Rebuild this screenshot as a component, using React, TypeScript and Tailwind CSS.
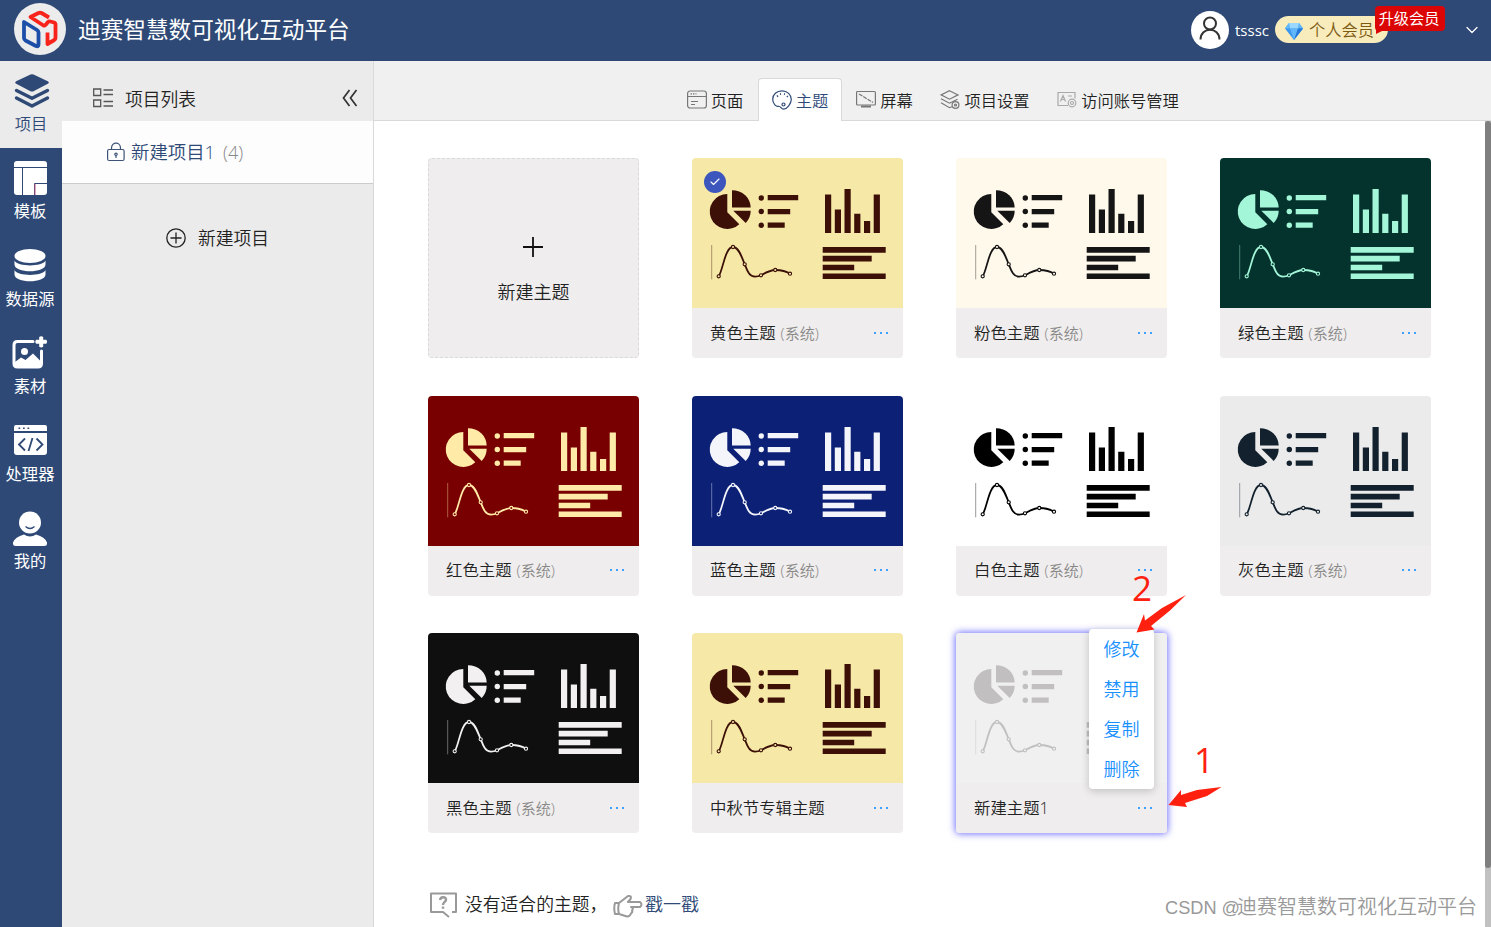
import React from 'react';
import { ChevronDown, Check } from 'lucide-react';

interface Theme {
  name: string;
  system?: boolean;
  bg: string;
  fg: string;
  checked?: boolean;
  active?: boolean;
}

const themes: Theme[] = [
  { name: '黄色主题', system: true, bg: '#f6e8a7', fg: '#3c0f07', checked: true },
  { name: '粉色主题', system: true, bg: '#fff9eb', fg: '#151515' },
  { name: '绿色主题', system: true, bg: '#04332e', fg: '#a3f6d8' },
  { name: '红色主题', system: true, bg: '#790000', fg: '#ffeaa7' },
  { name: '蓝色主题', system: true, bg: '#0c2176', fg: '#f3f5fb' },
  { name: '白色主题', system: true, bg: '#ffffff', fg: '#000000' },
  { name: '灰色主题', system: true, bg: '#ebebeb', fg: '#13212e' },
  { name: '黑色主题', system: true, bg: '#0f0f0f', fg: '#f2f0f0' },
  { name: '中秋节专辑主题', bg: '#f6e8a7', fg: '#3c0f07' },
  { name: '新建主题1', bg: '#f0f0f0', fg: '#c1bfbf', active: true },
];

const menuItems = ['修改', '禁用', '复制', '删除'];

const Logo = () => (
  <svg width="52" height="52" viewBox="0 0 52 52" fill="none" strokeWidth="3.800" strokeLinejoin="round">
    <circle cx="26" cy="26" r="26" fill="#ececec" />
    <path d="M10 19v16q0 1.500 1.500 2.500L22 43q2.500 1 2.500-1.500V29.500q0-1.500-1.500-2.500z" stroke="#1d4fa8" />
    <path d="M35 14.500L27.500 10q-1.500-.5-3 0L16.500 14l13 8.500q1 .5 2-.5l2.500-3q1-1 2.500-.5l3.500 1q1.500.5 1.500 2v13q0 2-2 3l-6 3.500V29.500" stroke="#f8231a" />
  </svg>
);

const ThumbChart = ({ color, bg }: { color: string; bg: string }) => (
  <svg width="211" height="150" viewBox="0 0 211 150" fill={color}>
    <path d="M35.300 36a17.500 17.500 0 1 0 12 30.200L35.300 54.300z" />
    <path d="M40 32.300a18.700 17.200 0 0 1 18.700 17.200H40z" />
    <path d="M41.300 52.700h17.400q0 7-5 12.300z" />
    {[40, 53.5, 67.3].map((y) => (
      <circle key={y} cx="69.300" cy={y} r="2.700" />
    ))}
    <path d="M75.700 37h30.500v5.200H75.700zM75.700 51h22.500v5.200H75.700zM75.700 64.600h17v5.200h-17z" />
    <path d="M133 36.500h6.200V75H133zM142.800 51.500h6.200V75h-6.200zM152.500 31h6.200v44h-6.200zM162.200 55.700h6.200V75h-6.200zM172 63h6.200v12H172zM181.700 36.500h6.200V75h-6.200z" />
    <path d="M130.700 89h63v5.700h-63zM130.700 97.800h49v5.600h-49zM130.700 106.800h31.500v5.400h-31.500zM130.700 115.500h63v5.500h-63z" />
    <path d="M19.700 87v34.300" stroke={color} strokeOpacity="0.4" />
    <path
      d="M26.700 118.300C31 112 33 89 41 89c6 0 9 11 11.700 17.300C55 112 57 118.700 63 118.700c3 0 4-.4 6-1.400 5-2.800 9-5.300 14.300-5.300 5.700 0 10.700 1 14.700 3.700"
      fill="none"
      stroke={color}
      strokeWidth="1.800"
    />
    {[[26.7, 118.3], [41, 89], [52.7, 106.3], [69, 117.3], [83.3, 112], [98, 115.7]].map(([x, y]) => (
      <circle key={x} cx={x} cy={y} r="1.600" fill={bg} stroke={color} strokeWidth="1.100" />
    ))}
  </svg>
);

const ThemeCard = ({ theme }: { theme: Theme }) => (
  <div
    className={`relative h-[200px] w-[211px] rounded ${theme.active ? 'shadow-[0_0_7px_1px_#7474ff]' : ''}`}
  >
    <div className="h-[150px] overflow-hidden rounded-t" style={{ backgroundColor: theme.bg }}>
      <ThumbChart color={theme.fg} bg={theme.bg} />
    </div>
    <div className="flex h-[50px] items-center rounded-b bg-[#efeded] pr-[15px] pl-[18px] text-[16.400px] text-[#222]">
      <span>{theme.name}</span>
      {theme.system && <span className="ml-[5px] text-[15px] text-[#888]">(系统)</span>}
      <div className="ml-auto flex gap-1 pb-px">
        <i className="size-[2px] bg-[#3da0ff]" />
        <i className="size-[2px] bg-[#3da0ff]" />
        <i className="size-[2px] bg-[#3da0ff]" />
      </div>
    </div>
    {theme.checked && (
      <div className="absolute top-[13px] left-3 flex size-[22px] items-center justify-center rounded-full bg-[#3c56be] text-white">
        <Check size={12} strokeWidth={2.2} />
      </div>
    )}
    {theme.active && (
      <div className="absolute -top-1 left-[133px] flex h-[160px] w-[65px] flex-col rounded-sm bg-white text-[18px] text-[#1890ff] shadow-[0_2px_8px_rgba(0,0,0,0.2)]">
        {menuItems.map((item) => (
          <div key={item} className="flex h-10 items-center justify-center">{item}</div>
        ))}
      </div>
    )}
  </div>
);

// left rail icons
const LayersIcon = () => (
  <svg className="ml-px" width="36" height="36" viewBox="0 0 36 36" fill="currentColor">
    <path d="M16.500 1.500q1.500-.7 3 0l14.300 6.700q2 1.300 0 2.600L20 18q-2 1-4 0L2.200 10.800q-2-1.300 0-2.600z" />
    <path d="M2.500 17.500L18 25.300l15.500-7.800M2.500 25L18 33l15.500-8" fill="none" stroke="currentColor" strokeWidth="3.400" strokeLinecap="round" strokeLinejoin="round" />
  </svg>
);
const TemplateIcon = () => (
  <svg width="33" height="34" viewBox="0 0 33 34">
    <rect width="33" height="34" rx="3" fill="#fff" />
    <path d="M0 6.500h33M8.500 6.500V34M20.500 34V22.500H33" fill="none" stroke="#2e4976" />
    <path d="M21 34V23" stroke="#c2527e" />
  </svg>
);
const DatabaseIcon = () => (
  <svg width="32" height="36" viewBox="0 0 32 36" fill="#fff">
    <ellipse cx="16" cy="8" rx="15.500" ry="7" />
    <path d="M.500 12.500c3 6.500 28 6.500 31 0v4c0 9-31 9-31 0zM.500 22c3 6.500 28 6.500 31 0v4.500c0 9-31 9-31 0z" />
  </svg>
);
const MaterialIcon = () => (
  <svg width="36" height="34" viewBox="0 0 36 34" fill="#fff">
    <path d="M21 5.500H5.500Q2 5.500 2 9v18.500Q2 31 5.500 31H26q3.500 0 3.500-3.500V15" fill="none" stroke="#fff" strokeWidth="3" strokeLinecap="round" />
    <circle cx="12.500" cy="15.500" r="3.500" />
    <path d="M3 26l6-4.500 4.500 2.500 7.500-6.500 8 8V31H3zM27.200 1q2-1.500 4 0v2.700h3q1.800 2 0 4h-3v3q-2 1.500-4 0v-3h-3q-1.800-2 0-4h3z" />
  </svg>
);
const ProcessorIcon = () => (
  <svg width="33" height="31" viewBox="0 0 33 31">
    <path d="M2 0h29q2 0 2 2v4H0V2q0-2 2-2zM0 8h33v19q0 3-3 3H3q-3 0-3-3z" fill="#fff" />
    <path d="M11 13.500L5 19.500l6 6M22.500 13.500l6 6-6 6M18.500 13l-4 13" fill="none" stroke="#2e4976" strokeWidth="1.800" />
    <path d="M4.500 2.500h1.700v1.500H4.500zM9 2.500h1.700v1.500H9zM13.500 2.500h1.700v1.500h-1.700z" fill="#2e4976" />
  </svg>
);
const MineIcon = () => (
  <svg className="mt-0.5" width="36" height="36" viewBox="0 0 36 36" fill="#fff">
    <circle cx="18" cy="11.500" r="11" />
    <path d="M12 23.500q6 4 12 0 9 2.500 11 8 .5 3.500-3 3.500H4q-3.500 0-3-3.500 2-5.500 11-8z" />
    <path d="M13.500 15.500q4.500 4 9 0" fill="none" stroke="#2e4976" strokeWidth="1.200" />
  </svg>
);

const navItems = [
  { label: '项目', icon: <LayersIcon />, active: true },
  { label: '模板', icon: <TemplateIcon /> },
  { label: '数据源', icon: <DatabaseIcon /> },
  { label: '素材', icon: <MaterialIcon /> },
  { label: '处理器', icon: <ProcessorIcon /> },
  { label: '我的', icon: <MineIcon /> },
];

// tab icons share one 20x20 box
const tabSvg = (children: React.ReactNode, color = '#777') => (
  <svg className="mb-[3px]" width="20" height="20" viewBox="0 0 20 20" fill="none" stroke={color} strokeWidth="1.200">
    {children}
  </svg>
);

const tabs = [
  {
    label: '页面',
    width: 'w-[84px] pr-0.5',
    icon: tabSvg(
      <>
        <rect x="0.600" y="1" width="18.800" height="17" rx="2.500" />
        <path d="M1 6.500h18M4 11.500h7M4 14.500h4" />
        <path d="M3.500 3.800h6" strokeDasharray="1.500 1" />
      </>
    ),
  },
  {
    label: '主题',
    width: 'w-[84px]',
    active: true,
    icon: tabSvg(
      <>
        <path d="M6.300 16.300C4.500 17 .7 14 .7 9.300.7 4.500 4.700.8 10 .8s9.300 4 9.300 8.700c0 2.500-1.300 4.600-2.600 6.300-1.400 1.800-3 3.400-5.200 3.400-2.600 0-2.500-3.400-5.200-2.900z" />
        <circle cx="11.500" cy="14.500" r="1.500" />
        <path d="M5 6.500l1-.8M8 4.200l1-.3M12 3.900l1 .3M15 6l.8.8" strokeWidth="1.700" />
      </>,
      '#2e4976'
    ),
  },
  {
    label: '屏幕',
    width: 'w-[85px]',
    icon: tabSvg(
      <>
        <rect x="0.600" y="1.500" width="18.800" height="13.500" rx="1" />
        <path d="M3 4l14 8.500" strokeDasharray="4 1" />
        <path d="M5 16.500h10" strokeWidth="2" />
      </>
    ),
  },
  {
    label: '项目设置',
    width: 'w-[117px] pr-px',
    icon: tabSvg(
      <>
        <path d="M9.500 .700l8.500 4.200-8.500 4.300L1 4.900zM1 8.700l8.500 4.500 8-4M1 12.700l8.500 5 2.500-1" />
        <circle cx="15.500" cy="15" r="3.400" />
        <circle cx="15.500" cy="15" r="1" />
      </>
    ),
  },
  {
    label: '访问账号管理',
    width: 'w-[149px] pr-px',
    icon: tabSvg(
      <>
        <path d="M11 15.500H1V2.500h17v6M3.500 11.500L6 5.500l2.500 6M4.500 9.500h3M11 6h4" />
        <circle cx="15" cy="13" r="3.800" />
        <circle cx="15" cy="13" r="1.500" />
      </>,
      '#a9a9a9'
    ),
  },
];

const Header = () => (
  <header className="flex h-[61px] shrink-0 items-center bg-[#2e4976] pl-[14px] text-white">
    <div className="pb-[3px]"><Logo /></div>
    <h1 className="ml-3 pb-0.5 text-[22.650px] font-normal">迪赛智慧数可视化互动平台</h1>
    <div className="ml-auto flex items-center pb-[2px]">
      <div className="flex size-[38px] items-center justify-center rounded-full bg-white">
        <svg className="mb-1" width="22" height="24" viewBox="0 0 22 24" fill="none" stroke="#333" strokeWidth="2">
          <circle cx="11" cy="7.500" r="6" />
          <path d="M1.500 23.500c0-13 19-13 19 0" />
        </svg>
      </div>
      <span className="ml-1.5 w-10 pt-0.5 text-[15px] font-normal">tsssc</span>
      <div className="relative flex h-[27px] w-[113px] items-center rounded-full bg-[#f8ecbd] pl-[10px] text-[16.300px] whitespace-nowrap text-[#7c5a12]">
        <svg className="mt-[3px]" width="18" height="17" viewBox="0 0 18 17">
          <path d="M4 0h10l4 5.500L9 17 0 5.500z" fill="#3b98ee" />
          <path d="M4 0L0 5.500h5zM14 0l4 5.500h-5z" fill="#5fb8f8" />
          <path d="M4 0h10l-1 5.500H5z" fill="#9bd8ff" />
          <path d="M5 5.500h8L9 17z" fill="#62b7fb" />
          <path d="M13 5.500h5L9 17z" fill="#2679d8" />
        </svg>
        <span className="ml-1.5 pt-0.5">个人会员</span>
        <div className="absolute -top-[10px] left-[100px] flex h-[25px] w-[70px] items-center justify-center rounded-sm bg-[#dc0505] pr-0.5 pb-px text-[15.200px] font-normal text-white">
          升级会员
          <i className="absolute top-[24px] left-px border-t-[4px] border-r-[8px] border-t-[#dc0505] border-r-transparent" />
        </div>
      </div>
      <ChevronDown size={20} strokeWidth={1.5} className="mr-[9px] ml-[74px]" />
    </div>
  </header>
);

const NavRail = () => (
  <nav className="flex w-[62px] shrink-0 flex-col bg-[#2e4976]">
    {navItems.map((item) => (
      <div
        key={item.label}
        className={`flex h-[87.400px] flex-col items-center text-[16.300px] ${item.active ? 'bg-[#ebebeb] text-[#2e4976]' : 'pr-0.5 font-normal text-white'}`}
      >
        <div className="mt-3 flex h-9 items-center">{item.icon}</div>
        <span className="mt-[3px] leading-6">{item.label}</span>
      </div>
    ))}
  </nav>
);

const ProjectPanel = () => (
  <aside className="flex w-[312px] shrink-0 flex-col border-r border-[#d9d9d9] bg-[#ebebeb] text-[18px] text-[#222]">
    <div className="flex h-[60px] items-center pt-[14px] pr-[15px] pl-[31px]">
      <svg width="20" height="20" viewBox="0 0 20 20" fill="none" stroke="#555" strokeWidth="1.300">
        <path d="M.7 1h7v6.500h-7zM.7 12h7v6.500h-7zM10.500 2H20M10.500 6.500H20M10.500 13.500H20M10.500 18H20" />
      </svg>
      <span className="ml-3 pt-0.5 text-[17.800px]">项目列表</span>
      <svg className="ml-auto" width="16" height="18" viewBox="0 0 16 18" fill="none" stroke="#333" strokeWidth="1.700">
        <path d="M7.500 1L1.500 9l6 8M14.500 1l-6 8 6 8" />
      </svg>
    </div>
    <div className="flex h-[63px] items-center border-b border-[#ccc] bg-[#fdfdfd] pl-[45px] text-[#2e4976]">
      <svg width="18" height="20" viewBox="0 0 18 20" fill="none" stroke="#3f5377" strokeWidth="1.200">
        <rect x="0.600" y="7.500" width="16.500" height="11" rx="1.500" />
        <path d="M4.500 7.500V6c0-6.500 9-6.500 9 0v1.500M9 13.500V16" />
        <circle cx="9" cy="12.300" r="1.200" />
      </svg>
      <span className="ml-1.5 text-[18.400px]">新建项目1</span>
      <span className="ml-2 text-[#888]">(4)</span>
    </div>
    <div className="mt-10 flex h-7 items-center justify-center">
      <svg width="20" height="20" viewBox="0 0 20 20" fill="none" stroke="#222" strokeWidth="1.300">
        <circle cx="10" cy="10" r="9.200" />
        <path d="M10 4.500v11M4.500 10h11" />
      </svg>
      <span className="ml-3 text-[17.800px]">新建项目</span>
    </div>
  </aside>
);

const Arrow = ({ className, d }: { className: string; d: string }) => (
  <svg className={className} width="56" height="42" viewBox="0 0 56 42" fill="#ff2010">
    <path d={d} />
  </svg>
);

export default function App() {
  return (
    <div className="relative flex h-[927px] w-[1491px] flex-col overflow-hidden bg-white font-['Open_Sans','Noto_Sans_CJK_SC',sans-serif] font-[350]">
      <Header />
      <div className="flex min-h-0 flex-1">
        <NavRail />
        <ProjectPanel />
        <main className="flex min-w-0 flex-1 flex-col">
          <div className="flex h-[60px] shrink-0 items-end border-b border-[#d9d9d9] bg-[#f0f0f0] pl-[300px] text-[16.300px] text-[#222]">
            {tabs.map((tab) => (
              <div
                key={tab.label}
                className={`-mb-px flex h-[43px] shrink-0 items-center justify-center gap-1 rounded-t ${tab.width} ${
                  tab.active ? 'border border-b-0 border-[#d9d9d9] bg-white pt-0.5 text-[#2e4976]' : 'pt-1'
                }`}
              >
                {tab.icon}
                <span>{tab.label}</span>
              </div>
            ))}
          </div>
          <div className="flex min-h-0 flex-1">
            <div className="flex-1 pt-[37px] pl-[54px]">
              <div className="grid grid-cols-[repeat(4,211px)] gap-x-[53px] gap-y-[37.500px]">
                <div className="flex h-[200px] flex-col items-center rounded border border-dashed border-[#d9d9d9] bg-[#efeded] pt-[78px] text-[18px] text-[#222]">
                  <svg className="mr-px" width="20" height="20" viewBox="0 0 20 20" stroke="#111" strokeWidth="1.800">
                    <path d="M10 0v20M0 10h20" />
                  </svg>
                  <span className="mt-[22px]">新建主题</span>
                </div>
                {themes.map((theme) => (
                  <ThemeCard key={theme.name} theme={theme} />
                ))}
              </div>
              <div className="mt-[57px] flex h-7 items-center text-[18px] text-[#222]">
                <svg className="mt-0.5" width="30" height="26" viewBox="0 0 30 26" fill="none" stroke="#999" strokeWidth="2" strokeLinejoin="round">
                  <path d="M24 20h4V1.500H3V20h12l6 5" />
                  <path d="M12 8c.5-4 6.500-3.500 6 0-.3 2-3 2-3 5M15 14.500v2.200" strokeWidth="2.400" />
                </svg>
                <span className="ml-[7px] w-[148px] text-[17.800px] whitespace-nowrap">没有适合的主题，</span>
                <svg className="mt-1" width="30" height="24" viewBox="0 0 30 24" fill="none" stroke="#999" strokeWidth="2" strokeLinejoin="round">
                  <path d="M2 9h4l9-7q4-.500 2.500 3L15 8h12q3 2.500 0 5h-9q3 1 1 3.500 1 1.500-1 3-1 3-4 3L6 20H2q-1.500-6 0-11zM6 9q-1.500 6 0 11" />
                </svg>
                <a className="ml-0.5 text-[#2e4976]">戳一戳</a>
              </div>
            </div>
            <div className="w-1.5 shrink-0 bg-[#c1c1c1]">
              <div className="h-[747px] rounded-full bg-[#7f7f7f]" />
            </div>
          </div>
        </main>
      </div>

      {/* hand-drawn step markers */}
      <span className="absolute top-[568px] left-[1132px] text-[35px] leading-10 font-normal text-[#ff2010]">2</span>
      <Arrow className="absolute top-[593px] left-[1135px]" d="M51 2L27 15 10 27.500 9 21 1.500 39.500 19.500 36.500 16 33 35 17.500z" />
      <span className="absolute top-[740px] left-[1194px] text-[35px] leading-10 font-normal text-[#ff2010]">1</span>
      <Arrow className="absolute top-[783px] left-[1167px]" d="M54.500 4L30 7 14 12V7L1.500 22 20 24l-2-4 22-7z" />
      <span className="absolute top-[892px] left-[1165px] font-['Liberation_Sans','Noto_Sans_CJK_SC',sans-serif] text-[20px] leading-[30px] whitespace-nowrap text-[#999]">
        <span className="inline-block w-[72px] text-[18.200px]">CSDN @</span>迪赛智慧数可视化互动平台
      </span>
    </div>
  );
}
